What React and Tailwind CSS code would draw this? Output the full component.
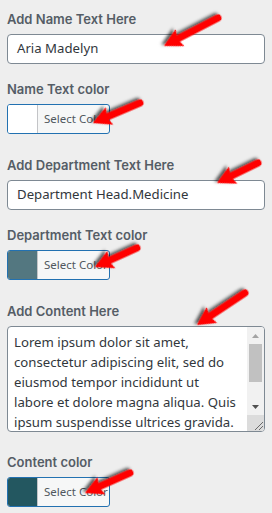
import React from "react";

const font = { fontFamily: '"Noto Sans", "Open Sans", Arial, sans-serif' };
const labelFont = { fontFamily: 'Inter, "Noto Sans", Arial, sans-serif' };

function Label({ children }) {
  return (
    <div className="text-[13px] leading-[20px] font-semibold text-[#555d66] mb-[5px]" style={labelFont}>
      {children}
    </div>
  );
}

function TextInput({ value }) {
  return (
    <div className="h-[30px] w-[258px] rounded-[4px] border border-[#7e8993] bg-white pl-[9px] flex items-center text-[13.2px] text-[#32373c]">
      {value}
    </div>
  );
}

function ColorButton({ color }) {
  return (
    <div className="h-[30px] w-[103px] rounded-[3px] border border-[#2271b1] flex overflow-hidden bg-[#f6f7f7]">
      <div className="w-[30px] h-full border-r border-[#c3c4c7]" style={{ backgroundColor: color }} />
      <div className="flex-1 flex items-center pl-[6px] text-[11.5px] text-[#50575e]">Select Color</div>
    </div>
  );
}

function Arrow({ x1, y1, x2, y2 }) {
  const dx = x2 - x1;
  const dy = y2 - y1;
  const L = Math.sqrt(dx * dx + dy * dy);
  const a = (Math.atan2(dy, dx) * 180) / Math.PI;
  return (
    <g transform={`translate(${x1} ${y1}) rotate(${a})`} filter="url(#sh)">
      <line x1="0" y1="0" x2={L - 12} y2="0" stroke="#ff0000" strokeWidth="7" strokeLinecap="round" />
      <polygon points={`${L},0 ${L - 18},-9.5 ${L - 15},0 ${L - 18},9.5`} fill="#ff0000" />
    </g>
  );
}

const lorem =
  "Lorem ipsum dolor sit amet, consectetur adipiscing elit, sed do eiusmod tempor incididunt ut labore et dolore magna aliqua. Quis ipsum suspendisse ultrices gravida. Risus commodo viverra maecenas accumsan lacus vel facilisis.";

function FakeTextarea() {
  return (
    <div className="h-[106px] w-[258px] rounded-[4px] border border-[#7e8993] bg-white flex overflow-hidden">
      <div className="flex-1 overflow-hidden pl-[6px] pr-[7px] pt-[5px] text-[13.2px] leading-[20px] text-[#32373c]">
        {lorem}
      </div>
      <div className="w-[17px] h-full bg-[#f1f1f1] flex flex-col">
        <div className="h-[17px] flex items-center justify-center">
          <svg width="7" height="4" viewBox="0 0 7 4">
            <polygon points="3.5,0 7,4 0,4" fill="#a3a3a3" />
          </svg>
        </div>
        <div className="mx-[2px] h-[38px] bg-[#c1c1c1]" />
        <div className="flex-1" />
        <div className="h-[17px] flex items-center justify-center">
          <svg width="7" height="4" viewBox="0 0 7 4">
            <polygon points="0,0 7,0 3.5,4" fill="#505050" />
          </svg>
        </div>
        <div className="h-[16px] bg-[#dcdcdc] relative">
          <svg className="absolute right-[1px] bottom-[1px]" width="9" height="9" viewBox="0 0 9 9">
            <line x1="1" y1="9" x2="9" y2="1" stroke="#6b6b6b" strokeWidth="1" />
            <line x1="5" y1="9" x2="9" y2="5" stroke="#6b6b6b" strokeWidth="1" />
          </svg>
        </div>
      </div>
    </div>
  );
}

export default function App() {
  return (
    <div className="relative w-[272px] h-[513px] bg-[#eeeeee] overflow-hidden" style={font}>
      <div className="pt-[9px] px-[7px]">
        <Label>Add Name Text Here</Label>
        <TextInput value="Aria Madelyn" />

        <div className="mt-[15px]">
          <Label>Name Text color</Label>
          <ColorButton color="#ffffff" />
        </div>

        <div className="mt-[21px]">
          <Label>Add Department Text Here</Label>
          <TextInput value="Department Head.Medicine" />
        </div>

        <div className="mt-[15px]">
          <Label>Department Text color</Label>
          <ColorButton color="#537780" />
        </div>

        <div className="mt-[21px]">
          <Label>Add Content Here</Label>
          <FakeTextarea />
        </div>

        <div className="mt-[20px]">
          <Label>Content color</Label>
          <ColorButton color="#235760" />
        </div>
      </div>

      <svg className="absolute top-0 left-0 pointer-events-none" width="272" height="513">
        <defs>
          <filter id="sh" x="-30%" y="-30%" width="160%" height="160%">
            <feDropShadow dx="2" dy="2.5" stdDeviation="1.6" floodColor="#000" floodOpacity="0.65" />
          </filter>
        </defs>
        <Arrow x1={218} y1={18} x2={164} y2={46} />
        <Arrow x1={140} y1={103} x2={93} y2={123} />
        <Arrow x1={258} y1={163} x2={217} y2={183} />
        <Arrow x1={137} y1={248} x2={95} y2={267} />
        <Arrow x1={245} y1={293} x2={197} y2={325} />
        <Arrow x1={130} y1={473} x2={85} y2={493} />
      </svg>
    </div>
  );
}
